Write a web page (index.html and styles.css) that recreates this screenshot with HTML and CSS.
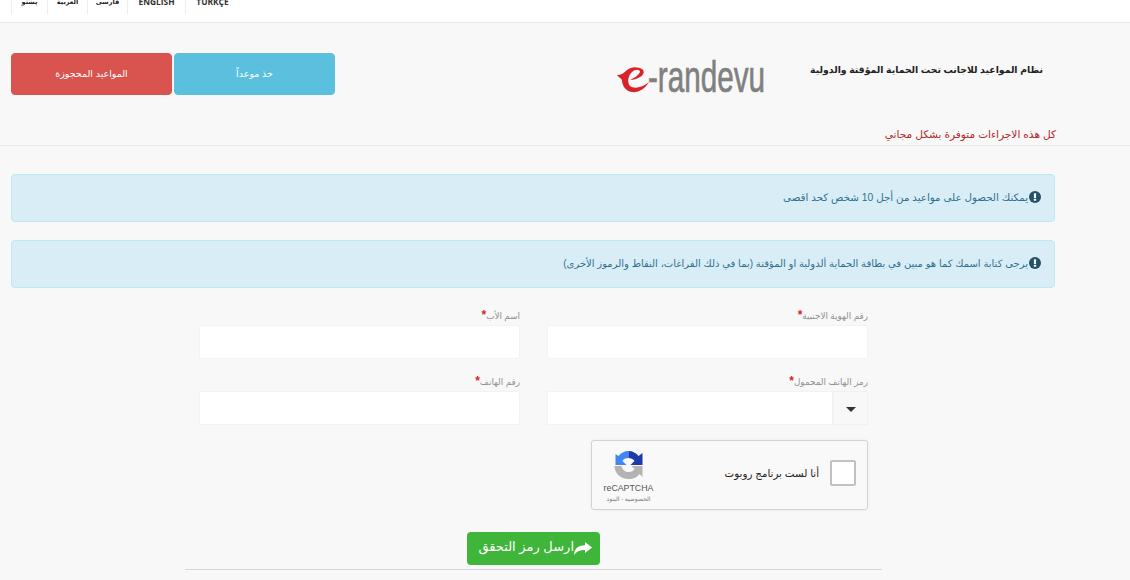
FILE: index.html
```html
<!DOCTYPE html>
<html lang="ar">
<head>
<meta charset="utf-8">
<title>e-randevu</title>
<link rel="stylesheet" href="styles.css">
</head>
<body>
<nav class="topnav">
  <a class="nav-item w36">پښتو</a>
  <a class="nav-item w40">العربية</a>
  <a class="nav-item w40">فارسی</a>
  <a class="nav-item w58 latin">ENGLISH</a>
  <a class="nav-item w54 latin">TÜRKÇE</a>
</nav>
<header class="head">
  <div class="head-actions">
    <a class="btn btn-red">المواعيد المحجوزة</a>
    <a class="btn btn-blue">خذ موعداً</a>
  </div>
  <div class="logo">
    <svg class="logo-svg" width="152" height="42" viewBox="0 0 152 42">
      <path class="mark" d="M1 17 C5 17 8 15 11 12 C16 8 22 9 26 11 C29 13 28 17 24 19 C21 21 17 22 14 22 C18 20 23 17 24 14 C24 11 19 11 16 14 C12 18 11 24 14 28 C18 31 26 30 33 24 C29 31 22 35 16 34 C9 33 6 27 6 22 C5 20 2 19 1 17 Z"/>
      <text class="logo-text" x="32" y="34" textLength="117" lengthAdjust="spacingAndGlyphs">-randevu</text>
    </svg>
  </div>
  <h1 class="title">نظام المواعيد للاجانب تحت الحماية المؤقتة والدولية</h1>
</header>
<p class="free-note">كل هذه الاجراءات متوفرة بشكل مجاني</p>
<main class="content">
  <div class="alert alert-wide">
    <svg class="alert-icon" width="12" height="12" viewBox="0 0 12 12"><circle cx="6" cy="6" r="6"/><rect class="alert-mark" x="4.9" y="2.2" width="2.2" height="4.8" rx=".6"/><rect class="alert-mark" x="4.9" y="7.8" width="2.2" height="2" rx=".5"/></svg>
    <span>يمكنك الحصول على مواعيد من أجل 10 شخص كحد اقصى</span>
  </div>
  <div class="alert">
    <svg class="alert-icon" width="12" height="12" viewBox="0 0 12 12"><circle cx="6" cy="6" r="6"/><rect class="alert-mark" x="4.9" y="2.2" width="2.2" height="4.8" rx=".6"/><rect class="alert-mark" x="4.9" y="7.8" width="2.2" height="2" rx=".5"/></svg>
    <span>يرجى كتابة اسمك كما هو مبين في بطاقة الحماية ألدولية او المؤقتة (بما في ذلك الفراغات، النقاط والرموز الأخرى)</span>
  </div>
  <form class="form">
    <div class="grid">
      <div class="field">
        <label class="label">رقم الهوية الاجنبية<span class="star">*</span></label>
        <div class="input"></div>
      </div>
      <div class="field">
        <label class="label">اسم الأب<span class="star">*</span></label>
        <div class="input"></div>
      </div>
      <div class="field">
        <label class="label">رمز الهاتف المحمول<span class="star">*</span></label>
        <div class="input select">
          <div class="select-value"></div>
          <div class="select-arrow"><svg width="10" height="5" viewBox="0 0 10 5"><path d="M0 0H10L5 5Z"/></svg></div>
        </div>
      </div>
      <div class="field">
        <label class="label">رقم الهاتف<span class="star">*</span></label>
        <div class="input"></div>
      </div>
    </div>
    <div class="captcha-row">
      <div class="captcha">
        <div class="check"></div>
        <div class="captcha-label">أنا لست برنامج روبوت</div>
        <div class="captcha-brand">
          <svg width="29" height="28" viewBox="0 0 28 28">
            <path class="rc-gray" d="M0 15 H7 C8 19 11 21 14 21 C17 21 19 20 20 18 L17 15 H28 V26 L25 23 C23 26 19 28 14 28 C6 28 0 22 0 15 Z"/>
            <path class="rc-blue" d="M14 0 V7 C11 7 9 8 8 10 L12 14 H1 V3 L4 5 C6 2 10 0 14 0 Z"/>
            <path class="rc-dark" d="M14 0 C18 0 22 2 24 5 L28 2 V14 H16 L20 10 C19 8 16 7 14 7 Z"/>
          </svg>
          <div class="rc-name">reCAPTCHA</div>
          <div class="rc-links">الخصوصية - البنود</div>
        </div>
      </div>
    </div>
    <div class="submit-row">
      <button type="button" class="submit">
        <svg width="18" height="14" viewBox="0 0 18 14"><path d="M18 5.5 L11 0 V3.2 C5 3.2 0 6 0 13.5 C2 9.5 6 8 11 8 V11 Z"/></svg>
        <span class="submit-text">ارسل رمز التحقق</span>
      </button>
    </div>
    <hr class="rule">
  </form>
</main>
</body>
</html>
```
FILE: styles.css
```css
* { box-sizing: border-box; }
html, body { margin: 0; height: 580px; overflow: hidden; }
body {
  background: #f8f8f8;
  font-family: "Liberation Sans", "DejaVu Sans", sans-serif;
  color: #333;
}
.topnav {
  display: flex;
  height: 23px;
  padding-left: 11px;
  background: #fff;
  border-bottom: 1px solid #e7e7e7;
  overflow: hidden;
  align-items: flex-start;
}
.nav-item {
  display: block;
  height: 22px;
  margin-top: -8px;
  padding-top: 4px;
  border-left: 1px solid #eee;
  font-size: 6.5px;
  font-weight: 700;
  line-height: 12px;
  text-align: center;
  color: #222;
}
.nav-item.latin { font-family: "Open Sans", sans-serif; font-size: 8.4px; color: #333; }
.w36 { width: 36px; }
.w40 { width: 40px; }
.w58 { width: 58px; }
.w54 { width: 54px; }
.head {
  display: flex;
  align-items: flex-start;
  height: 100px;
  padding: 30px 0 0 11px;
}
.head-actions { display: flex; gap: 2px; }
.btn {
  display: flex;
  align-items: center;
  justify-content: center;
  width: 161px;
  height: 42px;
  padding-bottom: 2px;
  border-radius: 4px;
  color: #fff;
  font-size: 9.5px;
  direction: rtl;
}
.btn-red { background: #d9534f; border: 1px solid #d9534f; }
.btn-blue { background: #5bc0de; border: 1px solid #5bc0de; }
.logo { margin: 5px 0 0 281px; width: 152px; height: 42px; }
.logo-svg { display: block; overflow: visible; }
.mark { fill: #d8232a; }
.logo-text {
  font-family: "Liberation Sans", sans-serif;
  font-size: 45px;
  fill: #808080;
  stroke: #808080;
  stroke-width: .7px;
}
.title {
  margin: 9px 0 0 41px;
  width: 234px;
  font-size: 9.3px;
  font-weight: 700;
  line-height: 16px;
  direction: rtl;
  white-space: nowrap;
  color: #222;
}
.free-note {
  margin: 0;
  height: 23px;
  padding-right: 74px;
  font-size: 10.6px;
  line-height: 23px;
  color: #b12a2a;
  direction: rtl;
  border-bottom: 1px solid #e9e9e9;
}
.content { padding: 28px 75px 0 11px; }
.alert {
  display: flex;
  direction: rtl;
  align-items: center;
  gap: 1px;
  height: 48px;
  margin-bottom: 18px;
  padding: 0 13px 2px;
  background: #d9edf7;
  border: 1px solid #bce8f1;
  border-radius: 4px;
  color: #31708f;
  font-size: 10px;
}
.alert-wide { font-size: 10.3px; }
.alert-icon { flex: none; fill: #245269; }
.alert-mark { fill: #fff; }
.form { display: block; }
.grid {
  display: grid;
  grid-template-columns: 321px 321px;
  justify-content: start;
  column-gap: 27px;
  row-gap: 16px;
  margin-right: 187px;
  margin-top: 21px;
  direction: rtl;
}
.field { display: flex; flex-direction: column; }
.label {
  height: 16px;
  font-size: 8.8px;
  line-height: 12px;
  color: #919191;
  direction: rtl;
}
.star { color: #d9232a; font-size: 12px; font-weight: 700; }
.input { height: 34px; background: #fff; border-radius: 2px; border: 1px solid #f3f3f3; }
.select { display: flex; background: transparent; direction: ltr; border: 0; }
.select-value { flex: 1; background: #fff; border: 1px solid #f3f3f3; }
.select-arrow {
  display: flex;
  width: 35px;
  padding-top: 3px;
  align-items: center;
  justify-content: center;
  background: #f8f8f8;
  border: 1px solid #f1f1f1;
}
.select-arrow svg { fill: #333; }
.captcha-row { display: flex; margin: 15px 0 0 580px; }
.captcha {
  display: flex;
  align-items: center;
  width: 277px;
  height: 70px;
  direction: rtl;
  background: #f9f9f9;
  border: 1px solid #d3d3d3;
  border-radius: 3px;
  padding: 0 11px 0 0;
  box-shadow: 0 0 3px rgba(0,0,0,.06);
}
.check {
  flex: none;
  width: 26px;
  height: 26px;
  background: #fff;
  border: 2px solid #c1c1c1;
  border-radius: 2px;
  margin-bottom: 4px;
}
.captcha-label { flex: 1; margin-right: 11px; font-size: 10.3px; color: #222; margin-bottom: 4px; }
.captcha-brand {
  flex: none;
  width: 73px;
  display: flex;
  flex-direction: column;
  align-items: center;
  direction: ltr;
  padding-top: 5px;
}
.rc-dark { fill: #1c3aa9; }
.rc-blue { fill: #4285f4; }
.rc-gray { fill: #b3b3b3; }
.rc-name { margin-top: 3px; font-size: 8.8px; line-height: 12px; color: #555; }
.rc-links { font-size: 6px; line-height: 11px; color: #777; direction: rtl; }
.submit-row { margin: 22px 0 0 456px; display: flex; }
.submit {
  display: flex;
  align-items: center;
  gap: 0;
  direction: rtl;
  width: 133px;
  height: 33px;
  padding: 0 8px;
  background: #3fb53a;
  border: 0;
  border-radius: 4px;
  color: #fff;
  font-family: inherit;
  font-size: 13px;
  white-space: nowrap;
}
.submit-text { padding-bottom: 4px; }
.submit svg { flex: none; fill: #fff; }
.rule { margin: 4px 0 0 174px; width: 697px; border: 0; border-top: 1px solid #d5d5d5; }
```
